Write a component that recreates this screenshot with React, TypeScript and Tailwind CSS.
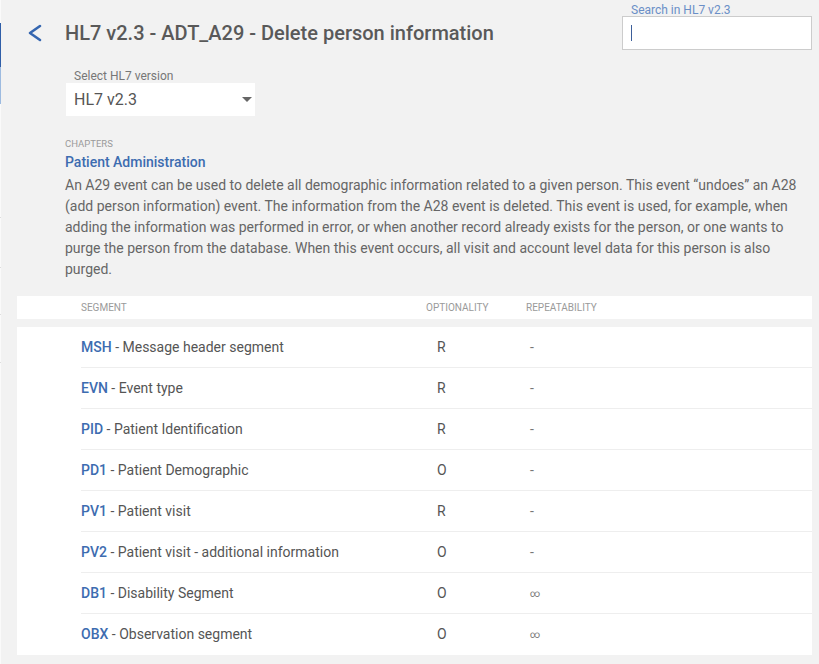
import React from 'react';

const segments = [
  { code: 'MSH', name: 'Message header segment', opt: 'R', rep: '-' },
  { code: 'EVN', name: 'Event type', opt: 'R', rep: '-' },
  { code: 'PID', name: 'Patient Identification', opt: 'R', rep: '-' },
  { code: 'PD1', name: 'Patient Demographic', opt: 'O', rep: '-' },
  { code: 'PV1', name: 'Patient visit', opt: 'R', rep: '-' },
  { code: 'PV2', name: 'Patient visit - additional information', opt: 'O', rep: '-' },
  { code: 'DB1', name: 'Disability Segment', opt: 'O', rep: '∞' },
  { code: 'OBX', name: 'Observation segment', opt: 'O', rep: '∞' },
];

function SideStrip() {
  return (
    <div className="w-px shrink-0 flex flex-col bg-[#fafafa]">
      <div className="h-[23px]" />
      <div className="h-[44px] bg-[#2f5ea8]" />
      <div className="h-[37px] bg-[#9dbbe0]" />
      <div className="h-[113px]" />
      <div className="h-px bg-[#ddd]" />
      <div className="h-[49px]" />
      <div className="h-px bg-[#ddd]" />
      <div className="h-[46px]" />
      <div className="h-px bg-[#ddd]" />
      <div className="h-[47px]" />
      <div className="h-px bg-[#ddd]" />
    </div>
  );
}

export default function App() {
  return (
    <div
      className="flex w-[819px] h-[664px] bg-[#f2f2f2] overflow-hidden"
      style={{ fontFamily: 'Roboto, "Liberation Sans", sans-serif' }}
    >
      <SideStrip />
      <div className="flex-1 flex flex-col">
        {/* header */}
        <div className="flex justify-between h-[50px]">
          <div className="flex items-center pt-[21px] h-[45px] pl-[27px]">
            <svg width="14" height="18" viewBox="0 0 14 18" className="text-[#3566b0]">
              <polyline
                points="12,2 2,9 12,16"
                fill="none"
                stroke="currentColor"
                strokeWidth="2.6"
                strokeLinecap="round"
                strokeLinejoin="round"
              />
            </svg>
            <h1 className="ml-[23px] text-[20px] leading-[24px] font-medium text-[#595959]">
              HL7 v2.3 - ADT_A29 - Delete person information
            </h1>
          </div>
          <div className="pt-[4px] pr-[7px] flex flex-col">
            <span className="pl-[9px] text-[12px] leading-[12px] text-[#6a8fc7]">Search in HL7 v2.3</span>
            <div className="w-[190px] h-[34px] bg-white border border-[#cccccc] flex items-center pl-[8px]">
              <div className="w-px h-[16px] bg-[#3d5f9a]" />
            </div>
          </div>
        </div>

        {/* version select */}
        <div className="mt-[19px] pl-[73px] text-[12px] leading-[14px] text-[#777]">Select HL7 version</div>
        <div className="ml-[65px] w-[189px] h-[33px] bg-white flex items-center justify-between pl-[8px] pr-[3px]">
          <span className="text-[16px] text-[#555]">HL7 v2.3</span>
          <svg width="10" height="5" viewBox="0 0 10 5">
            <polygon points="0,0 10,0 5,5" fill="#666" />
          </svg>
        </div>

        {/* chapters */}
        <div className="pl-[64px] pr-[14px]">
          <div className="mt-[22px] text-[9.5px] leading-[12px] text-[#9a9a9a]">CHAPTERS</div>
          <div className="mt-[3px] text-[14px] leading-[18px] font-medium text-[#3d6cb0]">Patient Administration</div>
          <p className="mt-[4px] text-[14px] leading-[21px] text-[#666] w-[740px]">
            An A29 event can be used to delete all demographic information related to a given person. This event “undoes” an A28 (add person information) event. The information from the A28 event is deleted. This event is used, for example, when adding the information was performed in error, or when another record already exists for the person, or one wants to purge the person from the database. When this event occurs, all visit and account level data for this person is also purged.
          </p>
        </div>

        {/* table */}
        <div className="mt-[16px] ml-[16px] w-[795px]">
          <div className="h-[23px] bg-white flex items-center text-[10px] text-[#9a9a9a]">
            <div className="pl-[64px] w-[409px]">SEGMENT</div>
            <div className="w-[100px]">OPTIONALITY</div>
            <div>REPEATABILITY</div>
          </div>
          <div className="mt-[8px] bg-white pl-[64px]">
            {segments.map((s, i) => (
              <div
                key={s.code}
                className={`h-[41px] flex items-center ${i < segments.length - 1 ? 'border-b border-[#eeeeee]' : ''}`}
              >
                <div className="w-[356px] text-[14px] text-[#555]">
                  <span className="font-medium text-[#3d6cb0]">{s.code}</span> - {s.name}
                </div>
                <div className="w-[93px] text-[14px] text-[#555]">{s.opt}</div>
                <div className={s.rep === '∞' ? 'text-[10px] text-[#777]' : 'text-[14px] text-[#777]'}>{s.rep}</div>
              </div>
            ))}
          </div>
        </div>
      </div>
    </div>
  );
}
